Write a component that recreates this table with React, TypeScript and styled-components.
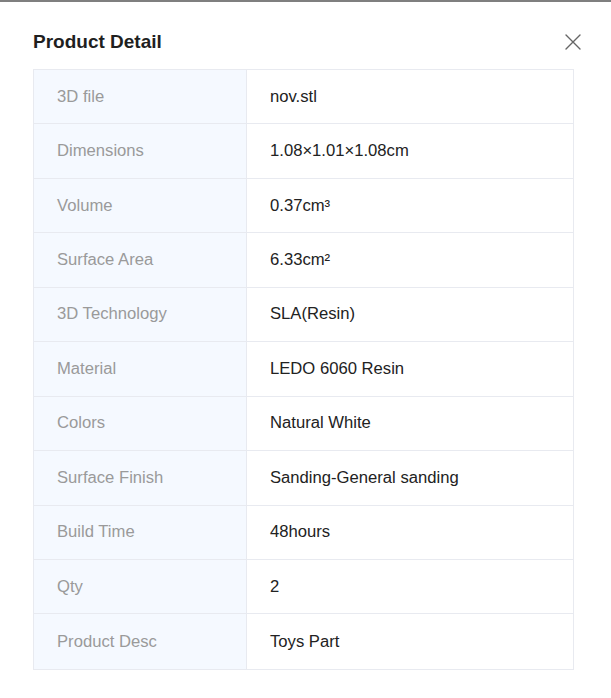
import React from 'react'
import styled, { createGlobalStyle } from 'styled-components'

const GlobalStyle = createGlobalStyle`
    html, body {
        margin: 0;
        padding: 0;
        background: #ffffff;
    }
    body {
        font-family: 'Liberation Sans', Arial, Helvetica, sans-serif;
    }
`

interface DetailItem {
    label: string
    value: string
}

const details: DetailItem[] = [
    { label: '3D file', value: 'nov.stl' },
    { label: 'Dimensions', value: '1.08×1.01×1.08cm' },
    { label: 'Volume', value: '0.37cm³' },
    { label: 'Surface Area', value: '6.33cm²' },
    { label: '3D Technology', value: 'SLA(Resin)' },
    { label: 'Material', value: 'LEDO 6060 Resin' },
    { label: 'Colors', value: 'Natural White' },
    { label: 'Surface Finish', value: 'Sanding-General sanding' },
    { label: 'Build Time', value: '48hours' },
    { label: 'Qty', value: '2' },
    { label: 'Product Desc', value: 'Toys Part' },
]

const CloseIcon = () => (
    <svg width="16" height="16" viewBox="0 0 16 16" fill="none">
        <path
            d="M1 1L15 15M15 1L1 15"
            stroke="#666666"
            strokeWidth="1.4"
            strokeLinecap="round"
        />
    </svg>
)

export default function App(): JSX.Element {
    return (
        <>
            <GlobalStyle />
            <Modal>
                <Header>
                    <Title>Product Detail</Title>
                    <CloseButton type="button" aria-label="Close">
                        <CloseIcon />
                    </CloseButton>
                </Header>
                <Table>
                    {details.map((item, i) => {
                        const isLast = i === details.length - 1
                        return (
                            <React.Fragment key={item.label}>
                                <LabelCell isLast={isLast}>{item.label}</LabelCell>
                                <ValueCell isLast={isLast}>{item.value}</ValueCell>
                            </React.Fragment>
                        )
                    })}
                </Table>
            </Modal>
        </>
    )
}

const Modal = styled.div`
    border-top: 2px solid #7f7f7f;
    padding: 27px 37px 30px 33px;
    width: 611px;
    box-sizing: border-box;
`

const Header = styled.div`
    display: flex;
    align-items: center;
    justify-content: space-between;
    height: 26px;
    margin-bottom: 14px;
`

const Title = styled.h2`
    margin: 0;
    font-size: 19px;
    line-height: 26px;
    font-weight: 700;
    color: #1f1f1f;
`

const CloseButton = styled.button`
    display: flex;
    align-items: center;
    justify-content: center;
    padding: 0;
    margin-right: -7px;
    border: 0;
    background: transparent;
    cursor: pointer;
`

const Table = styled.div`
    display: grid;
    grid-template-columns: 213px 1fr;
    border: 1px solid #e8eaf0;
`

type CellProps = { isLast: boolean }

const Cell = styled.div<CellProps>`
    display: flex;
    align-items: center;
    height: 54.45px;
    box-sizing: border-box;
    padding: 0 23px;
    font-size: 16.65px;
    border-bottom: ${(p) => (p.isLast ? '0' : '1px solid #e8eaf0')};
`

const LabelCell = styled(Cell)`
    background: #f5f9ff;
    color: #9a9a9a;
    border-right: 1px solid #e8eaf0;
`

const ValueCell = styled(Cell)`
    background: #ffffff;
    color: #222222;
`
